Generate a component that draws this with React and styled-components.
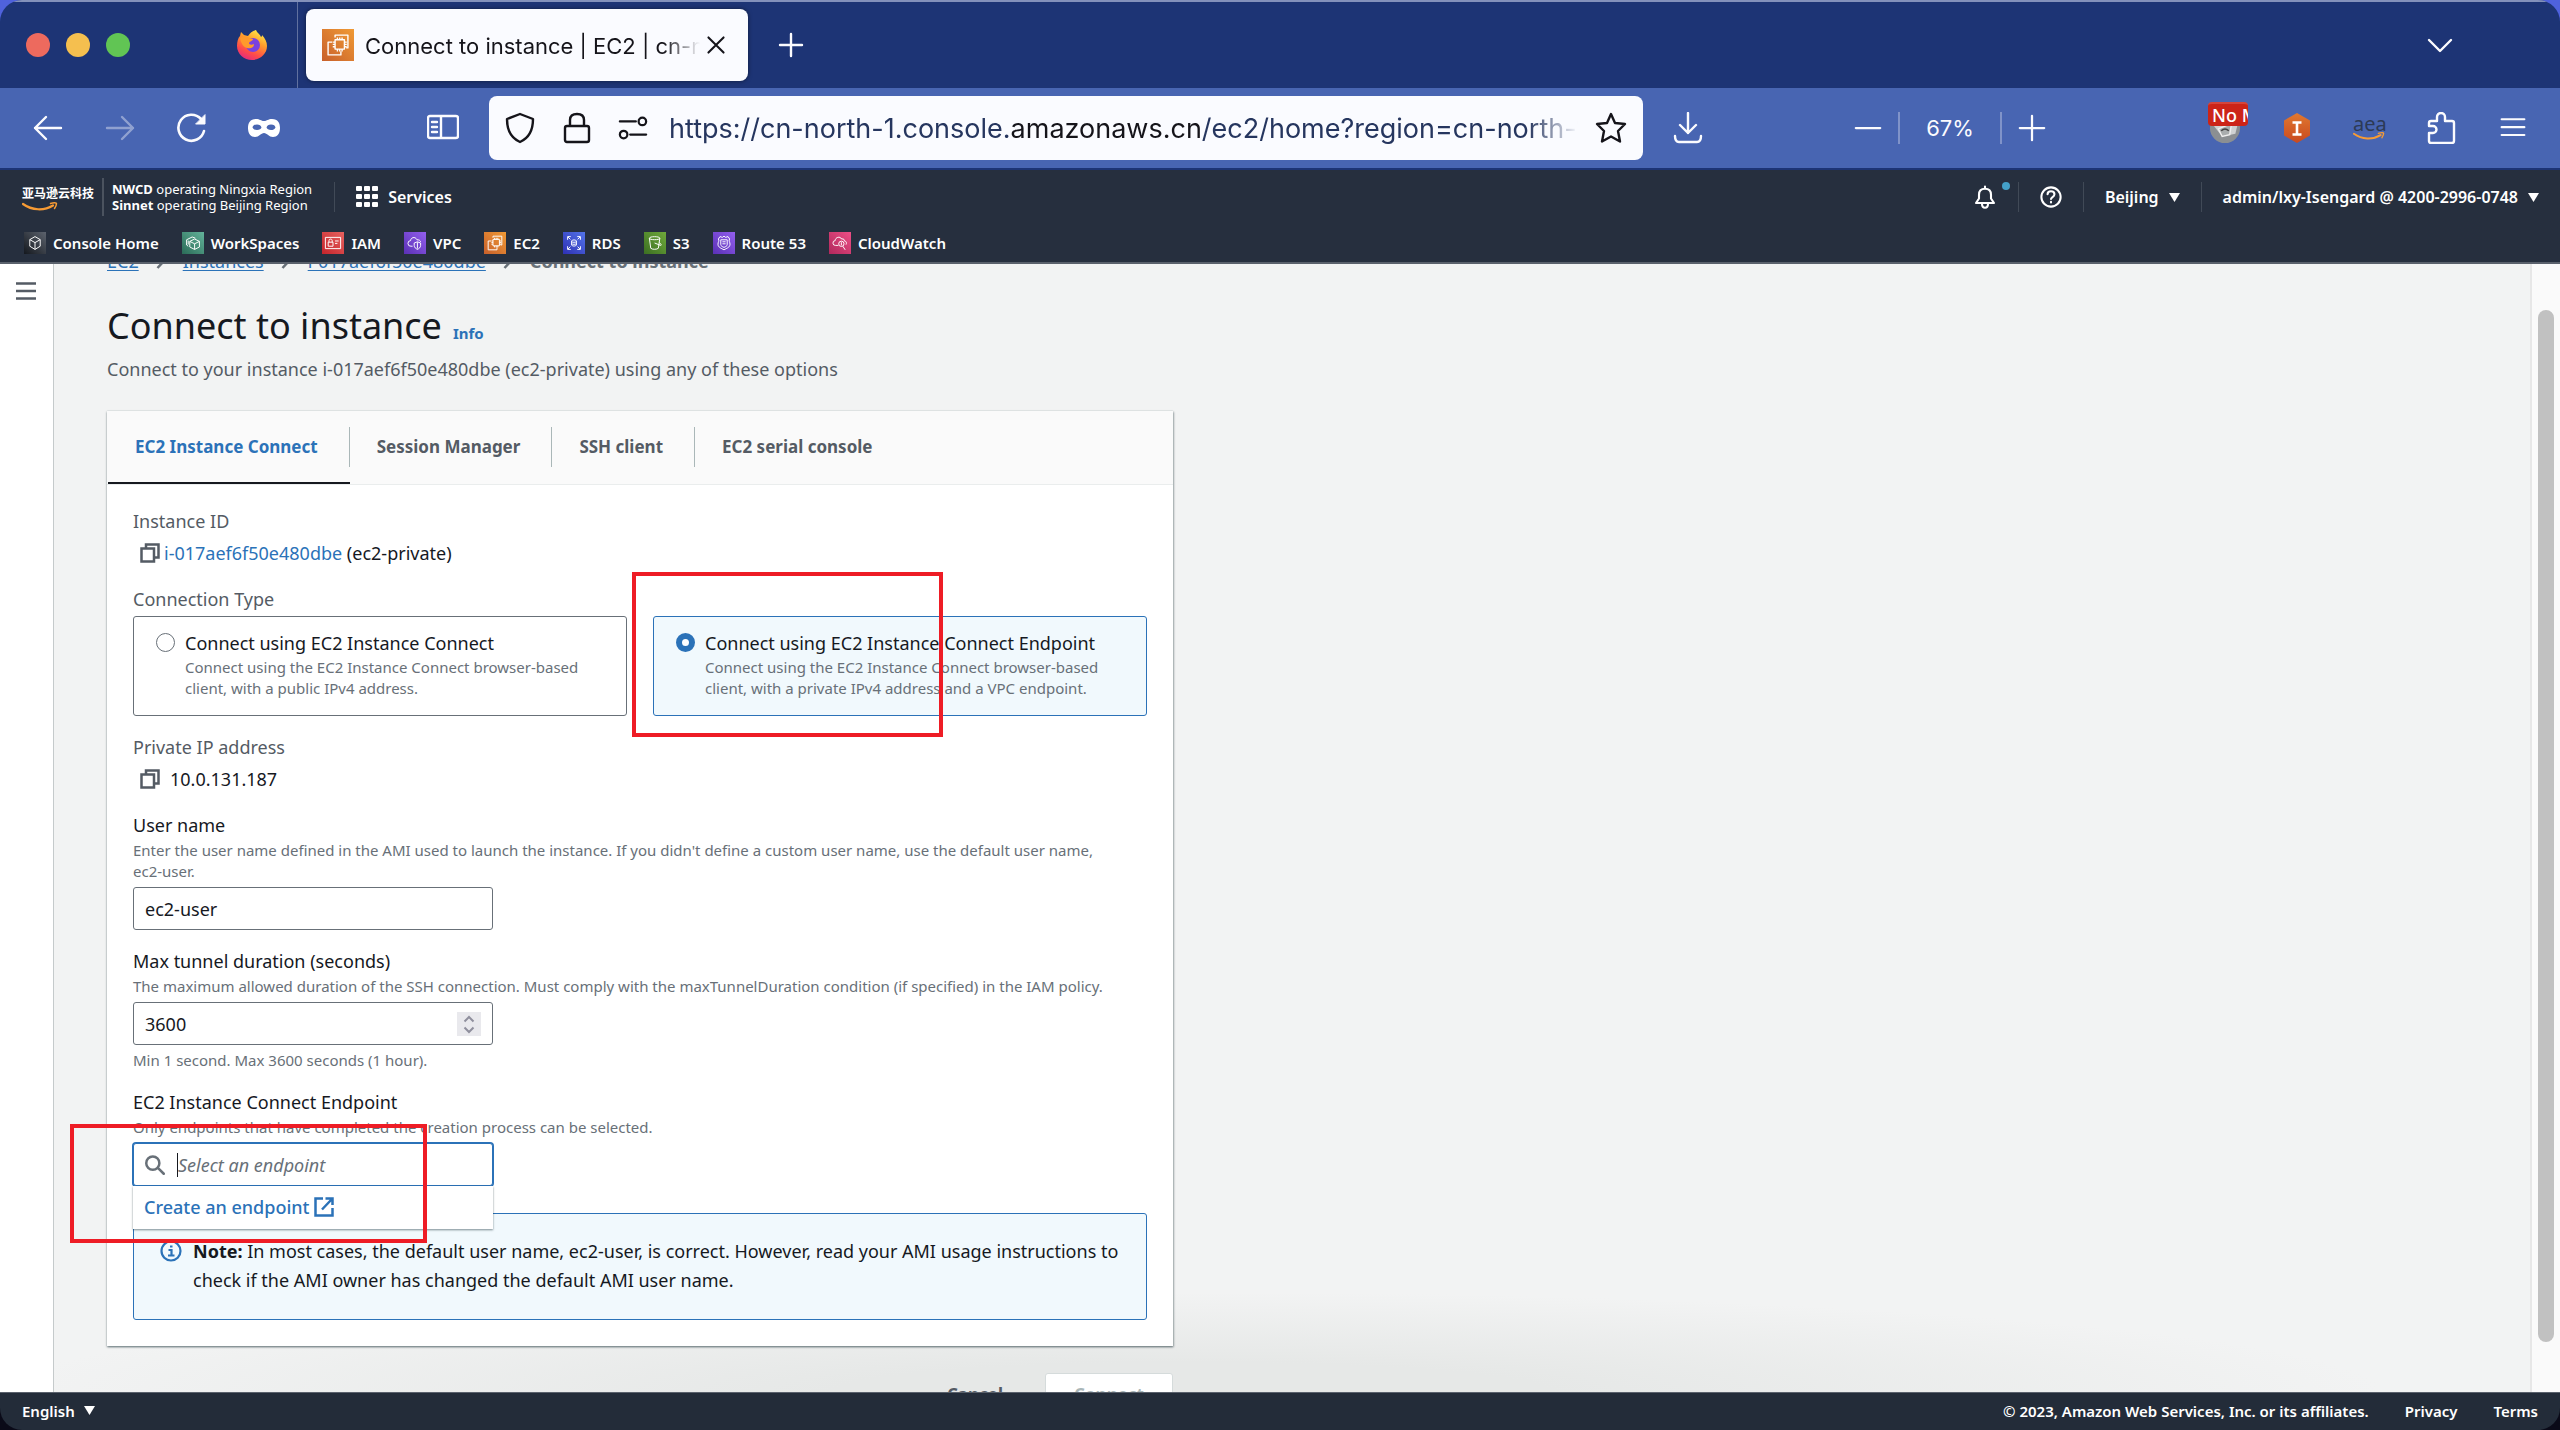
import React, { useState } from 'react'
import styled, { createGlobalStyle, css } from 'styled-components'

const services = [
  { name: 'Console Home', from: '#14181e', to: '#5c636e', icon: 'cube' },
  { name: 'WorkSpaces', from: '#2a6b57', to: '#63b39a', icon: 'workspaces' },
  { name: 'IAM', from: '#c4242b', to: '#e8625f', icon: 'iam' },
  { name: 'VPC', from: '#5a30b5', to: '#935fee', icon: 'vpc' },
  { name: 'EC2', from: '#c8602b', to: '#f09a35', icon: 'ec2' },
  { name: 'RDS', from: '#2e30b4', to: '#5374e8', icon: 'rds' },
  { name: 'S3', from: '#3c6f22', to: '#6fa93b', icon: 's3' },
  { name: 'Route 53', from: '#5a30b5', to: '#935fee', icon: 'route53' },
  { name: 'CloudWatch', from: '#b0285c', to: '#ee4f86', icon: 'cloudwatch' },
]

const glyphs = {
  cube: <path d="M12 4l6.500 3.800v8.200L12 20l-6.500-4V7.800zM5.500 7.800L12 11.500l6.500-3.700M12 11.500V20" />,
  workspaces: (
    <path d="M14 7l6 3v7l-6 3-6-3v-7zM8 10l6 3 6-3M14 13v7M6 16l-2-1.500V8L11 4.500l4 1.500M6 9v5" />
  ),
  iam: <path d="M2.500 5h19v14h-19zM6 11h6v5H6zM7 11V9c0-2.500 4-2.500 4 0v2M14.500 9.500h4.500M14.500 12.500h3" />,
  vpc: (
    <path d="M9 16H7a3.500 3.500 0 0 1-.5-7C6.500 5.500 12 3 14.500 8c3 0 4 1 4.500 2.500M15 10.500l4 1.500v3c0 2.500-2 4-4 5-2-1-4-2.500-4-5v-3zM15 11v8" />
  ),
  ec2: (
    <path d="M9.500 7.500h8v8h-8zM11.500 5.500v2M13.500 5.500v2M15.500 5.500v2M11.500 15.500v2M13.500 15.500v2M15.500 15.500v2M7.500 9.500h2M7.500 11.500h2M7.500 13.500h2M17.500 9.500h2M17.500 11.500h2M17.500 13.500h2M9.500 5.500v-2h11v11h-1.500M7 9.500H3.500v11h11v-3" />
  ),
  rds: (
    <path d="M4 8V4h4M16 4h4v4M20 16v4h-4M8 20H4v-4M4.500 4.500l3 3M19.500 4.500l-3 3M19.500 19.500l-3-3M4.500 19.500l3-3M9 9.500c0-1.800 6-1.800 6 0v5c0 1.800-6 1.800-6 0zM9 10c0 1.500 6 1.500 6 0M9 12.500c0 1.500 6 1.500 6 0" />
  ),
  s3: <path d="M5 6c0-2.500 13-2.500 13 0l-1.800 12.500c-1.500 1.800-8 1.800-9.500 0zM5 6c0 2.500 13 2.500 13 0M11.500 12l7.500 3c1.500 0 .5-2-1.500-3.500" />,
  route53: (
    <path d="M12 3.500l2 1.500 3-1 2 3c-1.500 2 .5 4 .5 6.500 0 4-4 5-7.500 7-3.500-2-7.500-3-7.500-7C4.500 11 6.500 9 5 7l2-3 3 1zM8 8h8v6c0 2-2 2.500-4 3.500-2-1-4-1.500-4-3.500zM10 10.500h4M10 13h4" />
  ),
  cloudwatch: (
    <path d="M10 15H6.500A3 3 0 0 1 6 9c0-4 6-6 8-2 3-.5 3.500 1 3.500 2.500 2.500 0 3 2.500 2 4.500M17 13a3.300 3.300 0 1 1-6.600 0 3.300 3.300 0 0 1 6.600 0zM15.500 16l3 4.500M13.700 11v4" />
  ),
}

function ServiceIcon({ icon, from, to, size = 22 }) {
  return (
    <svg width={size} height={size} viewBox="0 0 24 24" aria-hidden="true">
      <defs>
        <linearGradient id={`g-${icon}-${size}`} x1="0" y1="1" x2="1" y2="0">
          <stop offset="0" stopColor={from} />
          <stop offset="1" stopColor={to} />
        </linearGradient>
      </defs>
      <rect width="24" height="24" fill={`url(#g-${icon}-${size})`} />
      <g fill="none" stroke="#fff" strokeWidth="1.200" strokeLinejoin="round" transform="translate(1.500 1.500) scale(0.875)">{glyphs[icon]}</g>
    </svg>
  )
}

function Line({ d, size = 32, width = 2.4, color = 'currentColor', children }) {
  return (
    <svg width={size} height={size} viewBox="0 0 32 32" fill="none" stroke={color} strokeWidth={width}
      strokeLinecap="round" strokeLinejoin="round" aria-hidden="true">
      {d && <path d={d} />}
      {children}
    </svg>
  )
}

const Smile = ({ width = 36 }) => (
  <svg width={width} height={width / 4} viewBox="0 0 36 9" fill="none" stroke="#f79b34" strokeLinecap="round" aria-hidden="true">
    <path d="M1 2c9 6.500 21 7 30 1.500" strokeWidth="2.200" />
    <path d="M28.500 1.500c3-1 6-1 6 0s-1 3.500-2 5" strokeWidth="1.500" />
  </svg>
)

const Triangle = () => (
  <svg width="11" height="9" viewBox="0 0 11 9" aria-hidden="true"><path d="M0 0h11L5.500 9z" fill="#fff" /></svg>
)

const CopyIcon = () => (
  <svg width="20" height="20" viewBox="0 0 20 20" fill="none" stroke="#545b64" strokeWidth="2.500" aria-hidden="true">
    <path d="M1.500 5.500h12.500v13H1.500zM6 5V1.500h12.500v13h-4" />
  </svg>
)

const Firefox = () => (
  <svg width="32" height="32" viewBox="0 0 32 32" aria-hidden="true">
    <defs>
      <linearGradient id="fox" x1="0.800" y1="0" x2="0.300" y2="1">
        <stop offset="0" stopColor="#fff24a" />
        <stop offset="0.400" stopColor="#ff9a2b" />
        <stop offset="0.750" stopColor="#ff4a4a" />
        <stop offset="1" stopColor="#e22a80" />
      </linearGradient>
    </defs>
    <path fill="url(#fox)" d="M20 1c1 3 4 4 5 7 1-.5 1-1 1-2 3 3 5 7 5 11 0 8-7 14-15 14S1 25 1 17c0-4 1-8 3-10l1-4c1 1 2 2 3 3l4 1c2-3 4-5 8-6z" />
    <circle cx="17" cy="16" r="7" fill="#7a41e0" />
    <path fill="#ff9a2b" d="M4 9c3-2 7-2 9 0l4 1c0 2-3 2-4 4 0 2 3 2 5 1 0 4-4 5-7 4-4-1-6-5-7-10z" />
  </svg>
)

const InfoIcon = () => (
  <svg width="22" height="22" viewBox="0 0 22 22" fill="none" stroke="#2b72b8" strokeWidth="2.200" aria-hidden="true">
    <circle cx="11" cy="11" r="9.500" />
    <path d="M8.500 10H11.500v5.500M8 15.500h6.500M10 6.500h2.500" />
  </svg>
)

const Crumb = () => (
  <svg width="10" height="16" viewBox="0 0 10 16" fill="none" stroke="#687078" strokeWidth="2.500" aria-hidden="true">
    <path d="M1.500 1l6.500 7-6.500 7" />
  </svg>
)

export default function App() {
  const [type, setType] = useState('endpoint')
  const [user, setUser] = useState('ec2-user')
  const [duration, setDuration] = useState(3600)
  const [endpoint, setEndpoint] = useState('')

  return (
    <>
      <GlobalStyle />
      <Window>
        <TabStrip>
          <Lights>
            <Light $color="#ed6a5e" />
            <Light $color="#f5bf4f" />
            <Light $color="#61c554" />
          </Lights>
          <Pinned><Firefox /></Pinned>
          <BrowserTab>
            <ServiceIcon icon="ec2" from="#c8602b" to="#f09a35" size={32} />
            <TabTitle>Connect to instance | EC2 | cn-north-1</TabTitle>
            <IconButton aria-label="Close tab" $color="#15141a"><Line size={22} width={3} d="M5 5l22 22M27 5L5 27" /></IconButton>
          </BrowserTab>
          <IconButton aria-label="New tab"><Line d="M16 5v22M5 16h22" /></IconButton>
          <Spacer />
          <ListTabs><IconButton aria-label="List all tabs"><Line d="M5 11l11 11 11-11" /></IconButton></ListTabs>
        </TabStrip>

        <Toolbar>
          <NavButtons>
            <IconButton aria-label="Back"><Line d="M29 16H3M14 5L3 16l11 11" /></IconButton>
            <IconButton aria-label="Forward" $faded><Line d="M3 16h26M18 5l11 11-11 11" /></IconButton>
            <IconButton aria-label="Reload"><Line width={2.6} d="M28 19A13 13 0 1 1 25 7"><path d="M29 3v9h-9z" fill="currentColor" strokeWidth="1" /></Line></IconButton>
            <IconButton aria-label="Private mask">
              <svg width="34" height="32" viewBox="0 0 34 32" fill="#fff" fillRule="evenodd" aria-hidden="true">
                <path d="M9 7c4 0 5 2 8 2s4-2 8-2c6 0 8 4 8 9 0 6-3 9-7 9s-6-4-9-4-5 4-9 4-7-3-7-9c0-5 2-9 8-9zM10 12.500c-3 0-4 1-4.500 3 1 2 2.500 2.500 4.500 2.500 2.500 0 4-1 4.500-2.500-.5-2-2-3-4.500-3zM24 12.500c-2.500 0-4 1-4.500 3 .5 1.500 2 2.500 4.500 2.500 2 0 3.500-.5 4.500-2.500-.5-2-1.500-3-4.500-3z" />
              </svg>
            </IconButton>
          </NavButtons>
          <IconButton aria-label="Sidebar"><Line d="M3 4h26q2 0 2 2v18q0 2-2 2H3q-2 0-2-2V6q0-2 2-2zM14 4v22M5 10h5M5 15h5M5 20h5" /></IconButton>
          <UrlBar>
            <Line color="#15141a" d="M16 2l13 5c0 12-4 19-13 23C7 26 3 19 3 7z" />
            <Line color="#15141a" d="M6 14h20q2 0 2 2v12q0 2-2 2H6q-2 0-2-2V16q0-2 2-2zM9 14V8q0-6 7-6t7 6v6" />
            <Line color="#15141a" size={30} d="M2 9h17M13 23h17M30 9a4 4 0 1 1-8 0 4 4 0 0 1 8 0zM10 23a4 4 0 1 1-8 0 4 4 0 0 1 8 0z" />
            <Url role="textbox" aria-label="Address" contentEditable suppressContentEditableWarning spellCheck={false}>
              https://cn-north-1.console.<b>amazonaws.cn</b>/ec2/home?region=cn-north-1
            </Url>
            <IconButton aria-label="Bookmark" $color="#15141a">
              <Line d="M16 2l4 9 10 1-7 7 2 10.500-9-5-9 5L9 19l-7-7 10-1z" />
            </IconButton>
          </UrlBar>
          <Downloads aria-label="Downloads"><Line d="M16 1v20M8 13l8 8 8-8M3 24q0 6 4 6h18q4 0 4-6" /></Downloads>
          <Spacer />
          <Zoom>
            <IconButton aria-label="Zoom out"><Line size={30} d="M3 16h26" /></IconButton>
            <ZoomValue>67%</ZoomValue>
            <IconButton aria-label="Zoom in"><Line size={30} d="M16 3v26M3 16h26" /></IconButton>
          </Zoom>
          <Extensions>
            <IconButton aria-label="Container extension">
              <svg width="32" height="32" viewBox="0 0 34 34" aria-hidden="true">
                <circle cx="17" cy="17" r="16" fill="#8b8f92" />
                <path d="M3 12l11 14 14-3 3-12" fill="#cfd2d2" />
                <path d="M10 18l14-6-2 12-8 2z" fill="#a9adae" stroke="#eee" strokeWidth="1.500" />
                <path d="M13 20q4-4 8 0" stroke="#444" strokeWidth="1.500" fill="none" />
              </svg>
              <Badge>No M</Badge>
            </IconButton>
            <IconButton aria-label="Isengard">
              <svg width="28" height="32" viewBox="0 0 28 32" aria-hidden="true">
                <defs>
                  <linearGradient id="hex" x1="0" y1="0" x2="0" y2="1">
                    <stop offset="0" stopColor="#e0782f" />
                    <stop offset="1" stopColor="#c9491f" />
                  </linearGradient>
                </defs>
                <path d="M14 1l13 7.500v15L14 31 1 23.500v-15z" fill="url(#hex)" />
                <path d="M9.500 10.500h9M14 10v13M9.500 22.500h9" stroke="#fff" strokeWidth="2.600" />
              </svg>
            </IconButton>
            <Aea aria-label="aea">aea<Smile width={32} /></Aea>
            <IconButton aria-label="Extensions">
              <Line d="M4 29V21h4a3.500 3.500 0 0 0 0-7H4V11q0-2 2-2h6V5a4 4 0 0 1 8 0v4h7q2 0 2 2v18q0 2-2 2H6q-2 0-2-2z" />
            </IconButton>
            <IconButton aria-label="Menu"><Line size={28} d="M3 6h26M3 15h26M3 24h26" /></IconButton>
          </Extensions>
        </Toolbar>

        <ConsoleNav>
          <NavRow>
            <Logo href="#home">亚马逊云科技<Smile /></Logo>
            <Operators>
              <div><b>NWCD</b> operating Ningxia Region</div>
              <div><b>Sinnet</b> operating Beijing Region</div>
            </Operators>
            <NavItem>
              <svg width="22" height="22" viewBox="0 0 22 22" fill="#fff" aria-hidden="true">
                {[0, 8, 16].map(y => [0, 8, 16].map(x => <rect key={`${x}${y}`} x={x} y={y} width="6" height="5" rx="1" />))}
              </svg>
              Services
            </NavItem>
            <Spacer />
            <NavItem aria-label="Notifications" $plain>
              <Line size={24} width={2.8} d="M4 24h24l-4-6v-5c0-5-3-8-8-8s-8 3-8 8v5zM16 5V2M12 25c0 7 8 7 8 0" />
              <Dot />
            </NavItem>
            <NavItem aria-label="Support">
              <Line size={22} width={3} d="M30 16a14 14 0 1 1-28 0 14 14 0 0 1 28 0zM11 12c0-6 10-6 10 0 0 4-5 4-5 7M16 23v1" />
            </NavItem>
            <NavItem>Beijing <Triangle /></NavItem>
            <NavItem>admin/lxy-Isengard @ 4200-2996-0748 <Triangle /></NavItem>
          </NavRow>
          <Favorites>
            {services.map(s => (
              <Favorite href="#service" key={s.name}><ServiceIcon {...s} />{s.name}</Favorite>
            ))}
          </Favorites>
        </ConsoleNav>

        <Body>
          <SideRail>
            <IconButton aria-label="Open navigation" $color="#545b64"><Line size={20} width={4} d="M1 4h30M1 16h30M1 28h30" /></IconButton>
          </SideRail>
          <Main>
            <Content>
              <Breadcrumbs>
                <a href="#ec2">EC2</a><Crumb />
                <a href="#instances">Instances</a><Crumb />
                <a href="#instance">i-017aef6f50e480dbe</a><Crumb />
                <b>Connect to instance</b>
              </Breadcrumbs>
              <Heading>
                <h1>Connect to instance</h1>
                <a href="#info">Info</a>
              </Heading>
              <Subtitle>Connect to your instance i-017aef6f50e480dbe (ec2-private) using any of these options</Subtitle>

              <Card>
                <Tabs role="tablist">
                  <Tab role="tab" aria-selected="true" $active><span>EC2 Instance Connect</span></Tab>
                  <Tab role="tab"><span>Session Manager</span></Tab>
                  <Tab role="tab"><span>SSH client</span></Tab>
                  <Tab role="tab"><span>EC2 serial console</span></Tab>
                </Tabs>
                <Form>
                  <div>
                    <Caption>Instance ID</Caption>
                    <Value>
                      <CopyButton aria-label="Copy instance ID"><CopyIcon /></CopyButton>
                      <span><a href="#instance">i-017aef6f50e480dbe</a> (ec2-private)</span>
                    </Value>
                  </div>

                  <div>
                    <Caption>Connection Type</Caption>
                    <Tiles>
                      <Tile $selected={type === 'connect'}>
                        <Radio type="radio" name="type" checked={type === 'connect'} onChange={() => setType('connect')} />
                        <div>
                          Connect using EC2 Instance Connect
                          <Hint>Connect using the EC2 Instance Connect browser-based client, with a public IPv4 address.</Hint>
                        </div>
                      </Tile>
                      <Tile $selected={type === 'endpoint'}>
                        <Radio type="radio" name="type" checked={type === 'endpoint'} onChange={() => setType('endpoint')} />
                        <div>
                          Connect using EC2 Instance Connect Endpoint
                          <Hint>Connect using the EC2 Instance Connect browser-based client, with a private IPv4 address and a VPC endpoint.</Hint>
                        </div>
                        <TypeMarker />
                      </Tile>
                    </Tiles>
                  </div>

                  <div>
                    <Caption>Private IP address</Caption>
                    <Value $wide>
                      <CopyButton aria-label="Copy IP address"><CopyIcon /></CopyButton>
                      <span>10.0.131.187</span>
                    </Value>
                  </div>

                  <div>
                    <Label htmlFor="user">User name</Label>
                    <Hint>Enter the user name defined in the AMI used to launch the instance. If you didn't define a custom user name, use the default user name, <Word>ec2-user.</Word></Hint>
                    <InputBox>
                      <input id="user" value={user} onChange={e => setUser(e.target.value)} />
                    </InputBox>
                  </div>

                  <div>
                    <Label htmlFor="duration">Max tunnel duration (seconds)</Label>
                    <Hint>The maximum allowed duration of the SSH connection. Must comply with the maxTunnelDuration condition (if specified) in the IAM policy.</Hint>
                    <InputBox>
                      <input id="duration" type="number" min="1" max="3600" value={duration} onChange={e => setDuration(e.target.value)} />
                      <Stepper>
                        <svg width="12" height="22" viewBox="0 0 12 22" fill="none" stroke="#8f8f9d" strokeWidth="2" aria-hidden="true">
                          <path d="M1.500 8.500L6 4l4.500 4.500M1.500 14.500L6 19l4.500-4.500" />
                        </svg>
                      </Stepper>
                    </InputBox>
                    <Limits>Min 1 second. Max 3600 seconds (1 hour).</Limits>
                  </div>

                  <div>
                    <Label htmlFor="endpoint">EC2 Instance Connect Endpoint</Label>
                    <Hint>Only endpoints that have completed the creation process can be selected.</Hint>
                    <InputBox $focused>
                      <Line size={20} width={4} color="#687078" d="M23 13a10.500 10.500 0 1 1-21 0 10.500 10.500 0 0 1 21 0zM21 21l9 9" />
                      <Caret />
                      <input id="endpoint" placeholder="Select an endpoint" value={endpoint} onChange={e => setEndpoint(e.target.value)} />
                      <Dropdown>
                        <a href="#create">
                          Create an endpoint
                          <svg width="20" height="20" viewBox="0 0 20 20" fill="none" stroke="currentColor" strokeWidth="2.500" aria-hidden="true">
                            <path d="M9 1.500H1.500v17h17V11M11.500 1.500h7V8M18 2L8 12.500" />
                          </svg>
                        </a>
                      </Dropdown>
                      <EndpointMarker />
                    </InputBox>
                  </div>

                  <Alert>
                    <InfoIcon />
                    <p><b>Note:</b> In most cases, the default user name, ec2-user, is correct. However, read your AMI usage instructions to check if the AMI owner has changed the default AMI user name.</p>
                  </Alert>
                </Form>
              </Card>

              <Actions>
                <ActionButton>Cancel</ActionButton>
                <ActionButton $boxed disabled>Connect</ActionButton>
              </Actions>
            </Content>
          </Main>
          <ScrollTrack><ScrollThumb /></ScrollTrack>
        </Body>

        <Footer>
          <button>English <Triangle /></button>
          <Spacer />
          <span>© 2023, Amazon Web Services, Inc. or its affiliates.</span>
          <a href="#privacy">Privacy</a>
          <a href="#terms">Terms</a>
        </Footer>
      </Window>
    </>
  )
}

const GlobalStyle = createGlobalStyle`
  * {
    box-sizing: border-box;
  }
  body {
    margin: 0;
    background: linear-gradient(#4f62dd 50%, #0a0a18 50%);
    font-family: "Noto Sans", "Noto Sans CJK SC", sans-serif;
    font-size: 18px;
    line-height: 28px;
    color: #16191f;
  }
  button, input {
    font: inherit;
    color: inherit;
  }
  button {
    border: none;
    padding: 0;
    background: none;
    cursor: pointer;
  }
  a {
    color: #2b72b8;
    text-decoration: none;
  }
  h1, p {
    margin: 0;
  }
  svg {
    display: block;
    flex: none;
  }
`

const Window = styled.div`
  height: 100vh;
  display: flex;
  flex-direction: column;
  border-radius: 22px;
  overflow: hidden;
`

const Spacer = styled.div`
  flex: 1;
`

const IconButton = styled.button`
  position: relative;
  display: flex;
  align-items: center;
  justify-content: center;
  width: 32px;
  height: 32px;
  color: ${p => p.$color || '#fbfbfe'};
  opacity: ${p => (p.$faded ? 0.4 : 1)};
`

/* browser chrome */
const TabStrip = styled.div`
  flex: none;
  height: 88px;
  display: flex;
  align-items: center;
  background: #1d3475;
  border-top: 2px solid #8391bb;
  font-family: Inter, sans-serif;
`

const Lights = styled.div`
  display: flex;
  gap: 16px;
  padding-left: 26px;
`

const Light = styled.span`
  width: 24px;
  height: 24px;
  border-radius: 50%;
  background: ${p => p.$color};
`

const Pinned = styled.div`
  display: flex;
  align-items: center;
  align-self: stretch;
  padding: 0 29px 0 106px;
  border-right: 1px solid #61719f;
`

const BrowserTab = styled.div`
  display: flex;
  align-items: center;
  width: 442px;
  height: 72px;
  margin: 0 27px 0 8px;
  padding: 0 16px;
  border-radius: 8px;
  background: #fafbff;
  box-shadow: 0 0 4px rgba(0, 0, 0, 0.5);
`

const TabTitle = styled.span`
  flex: 1;
  margin-left: 11px;
  padding-top: 2px;
  overflow: hidden;
  white-space: nowrap;
  font-size: 22px;
  color: #15141a;
  mask-image: linear-gradient(to left, transparent, #000 36px);
`

const ListTabs = styled.div`
  padding-right: 104px;
`

const Toolbar = styled.div`
  flex: none;
  height: 82px;
  display: flex;
  align-items: center;
  padding: 0 31px 0 32px;
  background: #4865b2;
  border-bottom: 2px solid #1d3475;
  font-family: Inter, sans-serif;
`

const NavButtons = styled.div`
  display: flex;
  gap: 40px;
  margin-right: 147px;
`

const UrlBar = styled.div`
  flex: 0 1 1154px;
  min-width: 0;
  height: 64px;
  display: flex;
  align-items: center;
  gap: 25px;
  margin-left: 30px;
  padding: 0 16px 0 15px;
  border-radius: 8px;
  background: #fafbff;
`

const Url = styled.div`
  flex: 1;
  min-width: 0;
  margin: 0 -8px 0 -4px;
  padding-top: 2px;
  overflow: hidden;
  white-space: nowrap;
  font-size: 27px;
  line-height: 40px;
  color: #26365f;
  outline: none;
  mask-image: linear-gradient(to left, transparent, #000 50px);
  b {
    font-weight: 400;
    color: #15141a;
  }
`

const Downloads = styled(IconButton)`
  margin-left: 29px;
`

const Zoom = styled.div`
  display: flex;
  align-items: center;
  gap: 14px;
`

const ZoomValue = styled.button`
  width: 104px;
  height: 32px;
  border: solid #8093c9;
  border-width: 0 2px;
  font-size: 22px;
  color: #fbfbfe;
`

const Extensions = styled.div`
  display: flex;
  gap: 40px;
  margin-left: 161px;
`

const Badge = styled.span`
  position: absolute;
  top: -10px;
  left: -1px;
  width: 40px;
  height: 24px;
  padding-left: 4px;
  overflow: hidden;
  border-radius: 4px;
  border-top: 2px solid #d4453b;
  background: #cc2418;
  white-space: nowrap;
  text-align: left;
  font: 500 18px/22px "Noto Sans", sans-serif;
  color: #fff;
`

const Aea = styled.button`
  width: 32px;
  font: 20px/16px "Noto Sans", sans-serif;
  color: #2c3a55;
`

/* console navigation */
const ConsoleNav = styled.header`
  flex: none;
  height: 94px;
  background: #262f3e;
  border-bottom: 2px solid #5a616c;
  color: #fff;
`

const NavRow = styled.div`
  display: flex;
  align-items: center;
  height: 54px;
`

const Logo = styled.a`
  margin: 0 8px 0 22px;
  color: #fff;
  font: 700 12px/18px "Noto Sans CJK SC", sans-serif;
`

const Operators = styled.div`
  padding: 3px 22px 3px 8px;
  border-left: 2px solid #4b535f;
  font-size: 13px;
  line-height: 16px;
`

const NavItem = styled.button`
  position: relative;
  display: flex;
  align-items: center;
  gap: 10px;
  height: 30px;
  padding: 0 21px;
  border-left: 1px solid ${p => (p.$plain ? 'transparent' : '#414a57')};
  font-size: 16px;
  font-weight: 600;
`

const Dot = styled.span`
  position: absolute;
  top: 0;
  right: 8px;
  width: 8px;
  height: 8px;
  border-radius: 50%;
  background: #44a0c8;
`

const Favorites = styled.nav`
  display: flex;
  gap: 23px;
  padding: 8px 24px;
`

const Favorite = styled.a`
  display: flex;
  align-items: center;
  gap: 7px;
  height: 22px;
  font-size: 15px;
  font-weight: 600;
  color: #fff;
`

/* page */
const Body = styled.div`
  flex: 1;
  min-height: 0;
  display: flex;
  background: #f2f3f3;
`

const SideRail = styled.aside`
  flex: none;
  width: 54px;
  padding: 11px 10px;
  background: #fff;
  border-right: 1px solid #c5cacb;
`

const Main = styled.main`
  flex: 1;
  overflow: hidden;
  padding: 0 53px;
  background: radial-gradient(ellipse 48% 100px at 46% 100%, #e6e8e7 30%, #f2f3f3);
`

/* scrolled down a little, the breadcrumbs slide under the header */
const Content = styled.div`
  max-width: 1066px;
  margin-top: -17px;
`

const Breadcrumbs = styled.nav`
  display: flex;
  align-items: center;
  gap: 17px;
  a {
    text-decoration: underline;
    text-underline-offset: 2px;
  }
  b {
    color: #687078;
  }
`

const Heading = styled.div`
  display: flex;
  align-items: baseline;
  gap: 11px;
  margin: 28px 0 6px;
  h1 {
    font-size: 36px;
    line-height: 46px;
    font-weight: 400;
  }
  a {
    font-size: 15px;
    font-weight: 700;
  }
`

const Subtitle = styled.p`
  color: #545b64;
`

const Card = styled.section`
  margin-top: 28px;
  background: #fff;
  box-shadow: 0 1px 2px rgba(0, 28, 36, 0.5), 1px 1px 2px rgba(0, 28, 36, 0.2), 0 -1px 0 #eaeded;
`

const Tabs = styled.div`
  display: flex;
  height: 74px;
  padding-left: 1px;
  background: #fafafa;
  border-bottom: 1px solid #eaeded;
`

const Tab = styled.button`
  display: flex;
  align-items: center;
  font-size: 17px;
  font-weight: 700;
  color: #545b64;
  border-bottom: 2px solid transparent;
  span {
    padding: 6px 31px 6px 27px;
    border-right: 1px solid #aab7b8;
  }
  &:last-child span {
    border: none;
  }
  ${p => p.$active && css`
    color: #2b72b8;
    border-color: #16191f;
  `}
`

const Form = styled.div`
  display: flex;
  flex-direction: column;
  gap: 18px;
  padding: 23px 26px 26px;
`

const Caption = styled.div`
  padding-bottom: 2px;
  line-height: 26px;
  color: #545b64;
`

const Label = styled.label`
  display: block;
  padding-bottom: 2px;
  line-height: 26px;
`

const Hint = styled.div`
  font-size: 15px;
  line-height: 21px;
  color: #687078;
`

const Word = styled.span`
  white-space: nowrap;
`

const Limits = styled(Hint)`
  margin-top: 5px;
`

const Value = styled.div`
  display: flex;
  align-items: center;
  gap: ${p => (p.$wide ? 10 : 4)}px;
  padding: 3px 0 1px 7px;
`

const CopyButton = styled.button`
  flex: none;
`

const Tiles = styled.div`
  display: grid;
  grid-template-columns: 1fr 1fr;
  gap: 26px;
  margin-top: 2px;
`

const Tile = styled.label`
  position: relative;
  display: flex;
  gap: 10px;
  padding: 12px 22px 16px;
  border: 1px solid ${p => (p.$selected ? '#2b72b8' : '#687078')};
  border-radius: 3px;
  background: ${p => (p.$selected ? '#f1f9fd' : '#fff')};
`

const Radio = styled.input`
  appearance: none;
  flex: none;
  width: 19px;
  height: 19px;
  margin: 4px 0 0;
  border: 1px solid #687078;
  border-radius: 50%;
  background: #fff;
  &:checked {
    border: 6px solid #2b72b8;
  }
`

const InputBox = styled.div`
  position: relative;
  display: flex;
  align-items: center;
  width: 360px;
  height: 43px;
  margin-top: 5px;
  padding: 0 11px;
  border: 1px solid ${p => (p.$focused ? '#2b72b8' : '#687078')};
  border-radius: 3px;
  background: #fff;
  box-shadow: ${p => (p.$focused ? '0 0 0 1px #2b72b8' : 'none')};
  input {
    flex: 1;
    min-width: 0;
    padding: 0;
    border: none;
    outline: none;
    background: none;
    appearance: textfield;
  }
  input::-webkit-inner-spin-button {
    display: none;
  }
  input::placeholder {
    font-style: italic;
    color: #687078;
    opacity: 1;
  }
`

const Stepper = styled.span`
  display: flex;
  align-items: center;
  justify-content: center;
  width: 24px;
  height: 24px;
  background: #e9e9ed;
`

const Caret = styled.span`
  width: 1px;
  height: 24px;
  margin-left: 12px;
  background: #16191f;
`

const Dropdown = styled.div`
  position: absolute;
  top: 100%;
  left: -1px;
  right: -1px;
  margin-top: 1px;
  padding: 7px 11px 8px;
  background: #fff;
  box-shadow: 0 1px 2px rgba(0, 28, 36, 0.5);
  a {
    display: flex;
    align-items: center;
    gap: 5px;
    font-weight: 500;
  }
`

const Marker = styled.span`
  position: absolute;
  border: 4px solid #ee1c25;
  pointer-events: none;
`

const TypeMarker = styled(Marker)`
  top: -45px;
  left: -22px;
  width: 311px;
  height: 165px;
`

const EndpointMarker = styled(Marker)`
  top: -20px;
  left: -64px;
  width: 357px;
  height: 119px;
`

const Alert = styled.div`
  display: flex;
  align-items: flex-start;
  gap: 11px;
  margin-top: 9px;
  padding: 23px 26px 24px;
  border: 1px solid #2b72b8;
  border-radius: 3px;
  background: #f1f9fd;
  svg {
    margin-top: 3px;
  }
  p {
    line-height: 29px;
  }
`

const Actions = styled.div`
  display: flex;
  justify-content: flex-end;
  gap: 14px;
  margin-top: 27px;
`

const ActionButton = styled.button`
  height: 43px;
  padding: 0 28px;
  border-radius: 3px;
  font-size: 17px;
  font-weight: 700;
  color: #545b64;
  ${p => p.$boxed && css`
    border: 1px solid #d5dbdb;
    background: #fff;
    color: #aab7b8;
  `}
`

const ScrollTrack = styled.div`
  flex: none;
  display: flex;
  justify-content: center;
  width: 30px;
  padding: 46px 0 50px;
  background: #fafafa;
  border-left: 2px solid #e7e7e7;
`

const ScrollThumb = styled.div`
  width: 16px;
  border-radius: 8px;
  background: #c1c1c1;
`

const Footer = styled.footer`
  flex: none;
  display: flex;
  align-items: center;
  gap: 36px;
  height: 38px;
  padding: 0 22px 2px;
  border-top: 1px solid #5a616c;
  background: #232c39;
  color: #fff;
  font-size: 15px;
  font-weight: 600;
  a {
    color: #fff;
  }
  button {
    display: flex;
    align-items: center;
    gap: 9px;
  }
`
